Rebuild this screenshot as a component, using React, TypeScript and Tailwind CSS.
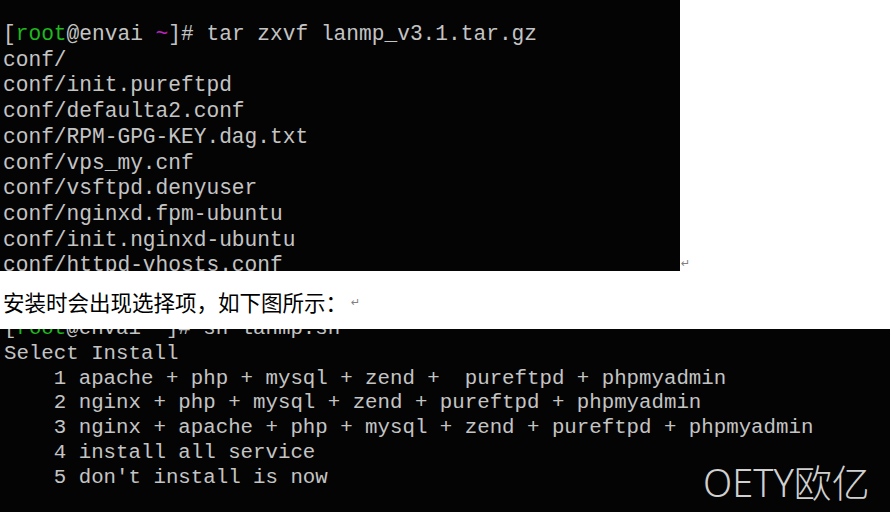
import React from "react";

function Prompt({ cmd }: { cmd: string }) {
  return (
    <>
      [<span className="text-[#1fb81f]">root</span>@envai <span className="text-[#c020c0]">~</span>]# {cmd}
    </>
  );
}

function Mark({ className }: { className: string }) {
  return (
    <span className={"text-[11px] leading-none text-[#808080] font-['DejaVu_Sans',sans-serif] " + className}>↵</span>
  );
}

export default function App() {
  const first = [
    "conf/",
    "conf/init.pureftpd",
    "conf/defaulta2.conf",
    "conf/RPM-GPG-KEY.dag.txt",
    "conf/vps_my.cnf",
    "conf/vsftpd.denyuser",
    "conf/nginxd.fpm-ubuntu",
    "conf/init.nginxd-ubuntu",
    "conf/httpd-vhosts.conf",
  ];
  const second = [
    "Select Install",
    "    1 apache + php + mysql + zend +  pureftpd + phpmyadmin",
    "    2 nginx + php + mysql + zend + pureftpd + phpmyadmin",
    "    3 nginx + apache + php + mysql + zend + pureftpd + phpmyadmin",
    "    4 install all service",
    "    5 don't install is now",
  ];
  return (
    <div className="w-[891px] h-[512px] bg-white overflow-hidden">
      <div className="flex items-end">
        <div className="w-[680px] h-[271px] bg-[#040404] overflow-hidden pt-[22px] pl-[3px] text-[21.2px] leading-[25.7px] text-[#c4c4c4] whitespace-pre font-['Liberation_Mono','Courier_New',monospace]">
          <div>
            <Prompt cmd="tar zxvf lanmp_v3.1.tar.gz" />
          </div>
          {first.map((l) => (
            <div key={l}>{l}</div>
          ))}
        </div>
        <Mark className="mb-[2px] ml-[1px]" />
      </div>
      <div className="h-[58px] flex items-center pt-[4px] pl-[3px] text-[21.5px] text-black font-['Noto_Sans_CJK_SC','Noto_Sans',sans-serif]">
        <span>安装时会出现选择项，如下图所示：</span>
        <Mark className="ml-[4px]" />
      </div>
      <div className="relative w-[890px] h-[183px] bg-[#040404] overflow-hidden">
        <div className="mt-[-12px] pl-[4px] text-[20.75px] leading-[24.8px] text-[#c4c4c4] whitespace-pre font-['Liberation_Mono','Courier_New',monospace]">
          <div>
            <Prompt cmd="sh lanmp.sh" />
          </div>
          {second.map((l) => (
            <div key={l}>{l}</div>
          ))}
        </div>
        <div className="absolute left-[703px] top-[134px] text-[38px] leading-none font-light text-[#d0d0d0] font-['Noto_Sans','Noto_Sans_CJK_SC',sans-serif]">
          OETY欧亿
        </div>
      </div>
    </div>
  );
}
